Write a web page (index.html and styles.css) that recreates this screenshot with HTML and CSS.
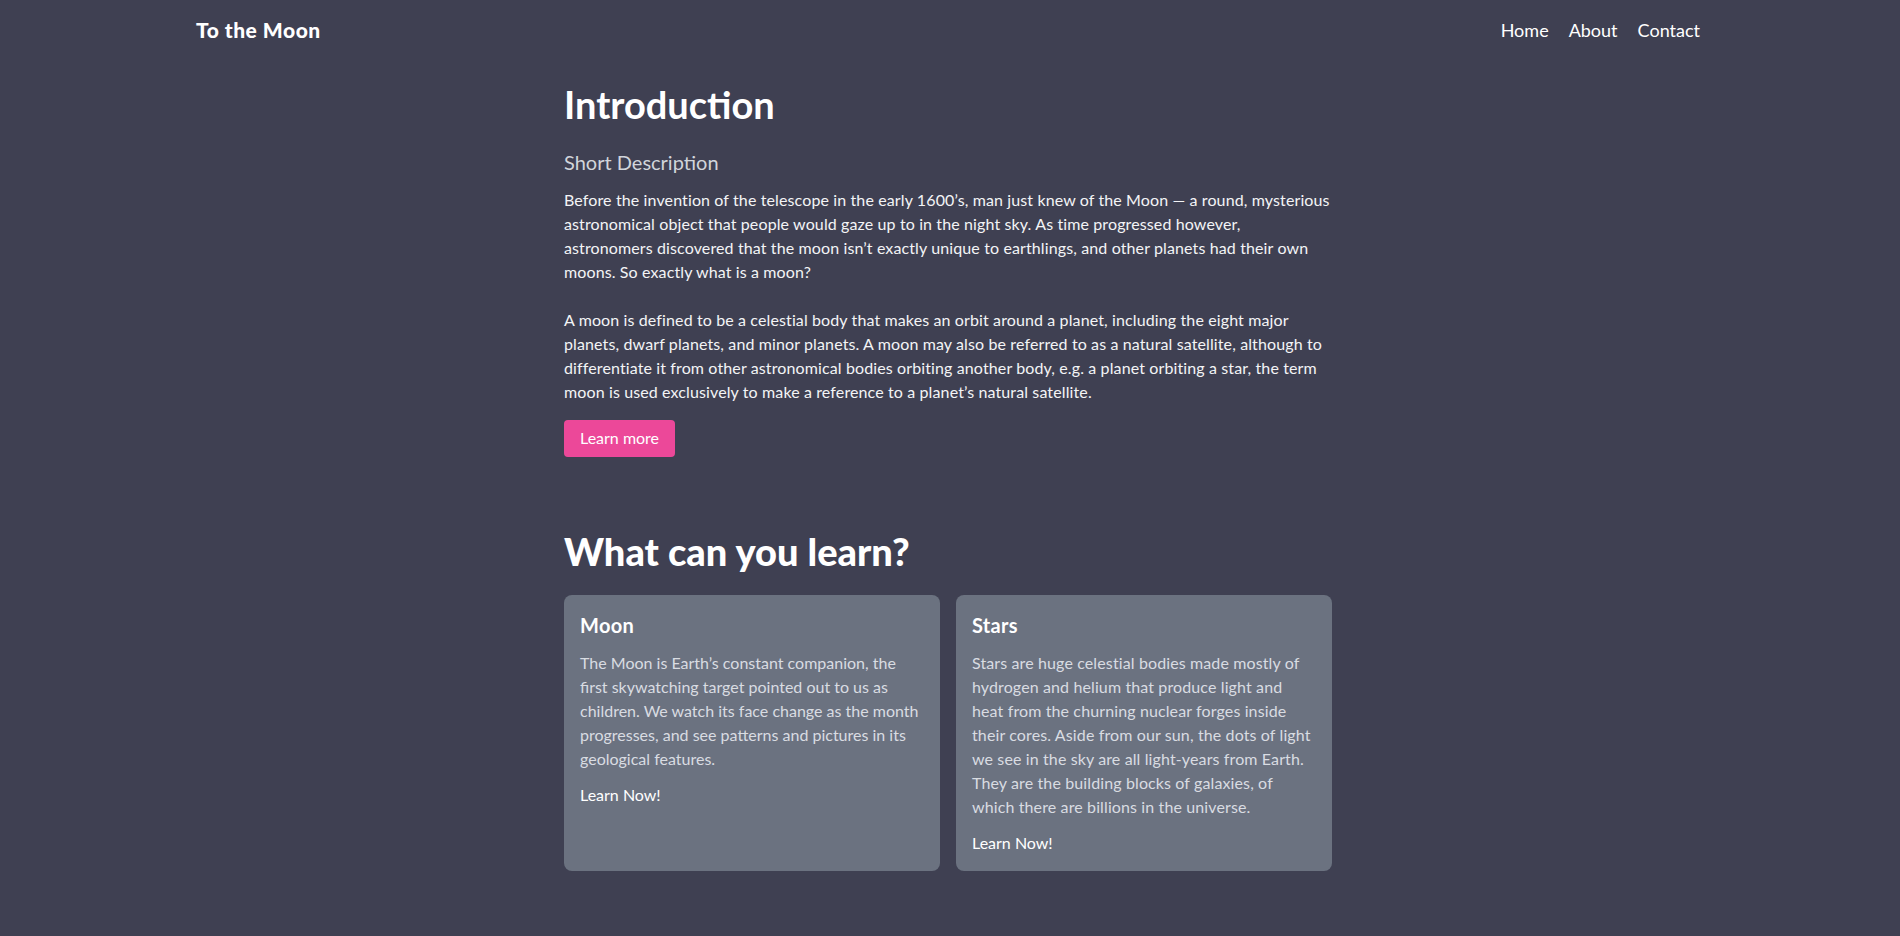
FILE: index.html
```html
<!DOCTYPE html>
<html lang="en">
<head>
<meta charset="utf-8">
<title>To the Moon</title>
<link rel="stylesheet" href="styles.css">
</head>
<body>
<div class="page">
  <header class="site-header">
    <div class="header-inner">
      <a class="brand" href="#">To the Moon</a>
      <nav class="nav">
        <a href="#">Home</a>
        <a href="#">About</a>
        <a href="#">Contact</a>
      </nav>
    </div>
  </header>
  <main class="main">
    <section class="intro">
      <h1 class="title">Introduction</h1>
      <h2 class="subtitle">Short Description</h2>
      <p class="body-text">Before the invention of the telescope in the early 1600’s, man just knew of the Moon — a round, mysterious astronomical object that people would gaze up to in the night sky. As time progressed however, astronomers discovered that the moon isn’t exactly unique to earthlings, and other planets had their own moons. So exactly what is a moon?<br><br>A moon is defined to be a celestial body that makes an orbit around a planet, including the eight major planets, dwarf planets, and minor planets. A moon may also be referred to as a natural satellite, although to differentiate it from other astronomical bodies orbiting another body, e.g. a planet orbiting a star, the term moon is used exclusively to make a reference to a planet’s natural satellite.</p>
      <a class="btn" href="#">Learn more</a>
    </section>
    <section class="learn">
      <h2 class="title title-heavy">What can you learn?</h2>
      <div class="cards">
        <article class="card card-moon">
          <h3 class="card-title">Moon</h3>
          <p class="card-text">The Moon is Earth’s constant companion, the first skywatching target pointed out to us as children. We watch its face change as the month progresses, and see patterns and pictures in its geological features.</p>
          <a class="card-link" href="#">Learn Now!</a>
        </article>
        <article class="card card-stars">
          <h3 class="card-title">Stars</h3>
          <p class="card-text">Stars are huge celestial bodies made mostly of hydrogen and helium that produce light and heat from the churning nuclear forges inside their cores. Aside from our sun, the dots of light we see in the sky are all light-years from Earth. They are the building blocks of galaxies, of which there are billions in the universe.</p>
          <a class="card-link" href="#">Learn Now!</a>
        </article>
      </div>
    </section>
  </main>
</div>
</body>
</html>
```
FILE: styles.css
```css
* { box-sizing: border-box; }
html, body { margin: 0; padding: 0; }
body {
  background: #3f4052;
  color: #ffffff;
  font-family: Lato, "Open Sans", sans-serif;
  font-size: 16px;
  line-height: 24px;
}
a { color: inherit; text-decoration: none; }
.page { padding-right: 4px; }

.site-header { padding: 16px 0; }
.header-inner {
  max-width: 1536px;
  margin: 0 auto;
  padding: 0 16px;
  display: flex;
  justify-content: space-between;
  align-items: center;
}
.brand {
  font-size: 21px;
  line-height: 28px;
  font-weight: 900;
  letter-spacing: 0.5px;
  color: #ffffff;
}
.nav { display: flex; gap: 20px; }
.nav a { font-size: 18px; line-height: 28px; color: #ffffff; }

.main {
  max-width: 768px;
  margin: 0 auto;
  padding-top: 24px;
}
.title {
  margin: 0;
  font-size: 38px;
  line-height: 40px;
  font-weight: 700;
  color: #ffffff;
}
.title-heavy { font-weight: 900; }
.intro .title { margin-bottom: 24px; }
.subtitle {
  margin: 0 0 12px;
  font-size: 20px;
  line-height: 28px;
  font-weight: 400;
  color: #d1d5db;
}
.body-text {
  margin: 0 0 16px;
  color: #f3f4f6;
  letter-spacing: 0.12px;
}
.btn {
  display: inline-block;
  background: #ec4899;
  color: #ffffff;
  padding: 6px 16px 7px;
  line-height: 24px;
  border-radius: 4px;
}
.learn { padding-top: 74px; }
.learn .title { margin-bottom: 24px; }
.cards {
  display: grid;
  grid-template-columns: 1fr 1fr;
  gap: 16px;
}
.card {
  background: #6b7280;
  border-radius: 8px;
  padding: 16px;
}
.card-title {
  margin: 0 0 12px;
  font-size: 20px;
  line-height: 28px;
  font-weight: 700;
  letter-spacing: 0.3px;
  color: #ffffff;
}
.card-text {
  margin: 0 0 12px;
  color: #d9dce2;
}
.card-stars .card-text { letter-spacing: 0.12px; }
.card-link { color: #ffffff; }
```
